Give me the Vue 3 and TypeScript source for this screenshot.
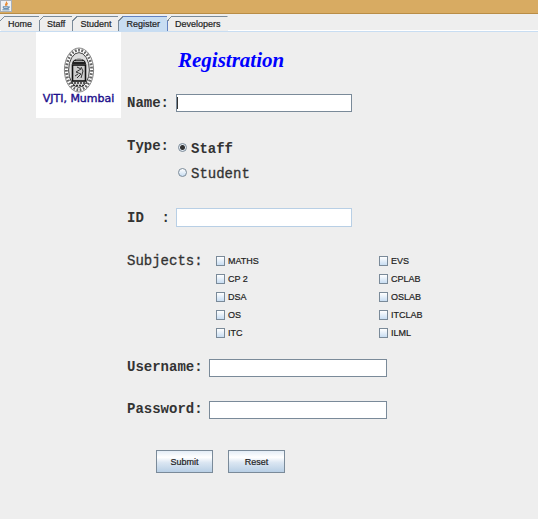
<script setup lang="ts">
import { ref } from 'vue'

const tabs: string[] = ['Home', 'Staff', 'Student', 'Register', 'Developers']
const activeTab = ref('Register')

const subjects: string[] = [
  'MATHS', 'EVS',
  'CP 2', 'CPLAB',
  'DSA', 'OSLAB',
  'OS', 'ITCLAB',
  'ITC', 'ILML',
]

const name = ref('')
const kind = ref('staff')
const id = ref('')
const chosen = ref<string[]>([])
const username = ref('')
const password = ref('')
</script>

<template>
  <div class="window">
    <header class="titlebar">
      <svg class="java" viewBox="0 0 12 12" aria-hidden="true">
        <rect x="0.5" y="0.5" width="11" height="11" fill="#eef1f4" stroke="#a9b0b8" />
        <path d="M6.4 1.6C7.4 3 4.6 3.6 5.8 5.8M7.6 3.2C6.4 4 6.4 4.6 6.8 5.6" fill="none" stroke="#e8872b" stroke-width="1.2" />
        <path d="M3 6.8H8.2V8.4H3.6ZM8.2 7H9.6L8.2 8.4M2.4 9.8H9.4" fill="none" stroke="#5d86a8" stroke-width="1" />
      </svg>
    </header>

    <nav class="tabs">
      <button
        v-for="tab in tabs"
        :key="tab"
        type="button"
        class="tab"
        :class="{ active: tab === activeTab }"
        @click="activeTab = tab"
      >
        {{ tab }}
      </button>
    </nav>

    <main class="panel">
      <figure class="logo">
        <svg class="crest" viewBox="0 0 32 46" aria-hidden="true">
          <ellipse cx="16" cy="23" rx="14.6" ry="22" fill="#fff" stroke="#777" stroke-width="0.9" />
          <ellipse cx="16" cy="23" rx="12.6" ry="19.8" fill="none" stroke="#666" stroke-width="2.8" stroke-dasharray="1.8 1.5" />
          <ellipse cx="16" cy="23" rx="10.4" ry="17.4" fill="#ddd" stroke="#333" stroke-width="0.9" />
          <path d="M9 17C9 10 23 10 23 17Z" fill="#222" />
          <path d="M11 14.5H21M13 12.8H19" stroke="#ccc" stroke-width="0.8" />
          <rect x="9.5" y="18" width="13" height="16" fill="#ccc" stroke="#111" stroke-width="1.6" />
          <path d="M14 20L18 22L13 25L18 27L14 31M18 20L20 24L18 31M12 29L15 27" fill="none" stroke="#333" stroke-width="1" />
          <path d="M8 36H24M10 38.5H22" stroke="#333" stroke-width="1.4" stroke-dasharray="2 1" />
        </svg>
        <figcaption>VJTI, Mumbai</figcaption>
      </figure>

      <form class="form" @submit.prevent>
        <h1>Registration</h1>

        <div class="row name-row">
          <label class="short" for="name">Name:</label>
          <input id="name" v-model="name" class="text focused" type="text" />
        </div>

        <div class="row type-row" role="radiogroup" aria-labelledby="type">
          <span id="type" class="short">Type:</span>
          <div class="radios">
            <label><input v-model="kind" type="radio" name="kind" value="staff" />Staff</label>
            <label class="plain"><input v-model="kind" type="radio" name="kind" value="student" />Student</label>
          </div>
        </div>

        <div class="row id-row">
          <label class="short" for="id"><span>ID</span><span>:</span></label>
          <input id="id" v-model="id" class="text pale" type="text" />
        </div>

        <div class="row subject-row" role="group" aria-labelledby="subjects">
          <span id="subjects" class="long plain">Subjects:</span>
          <div class="subjects">
            <label v-for="s in subjects" :key="s">
              <input v-model="chosen" type="checkbox" :value="s" />{{ s }}
            </label>
          </div>
        </div>

        <div class="row user-row">
          <label class="long" for="username">Username:</label>
          <input id="username" v-model="username" class="text" type="text" />
        </div>

        <div class="row pass-row">
          <label class="long" for="password">Password:</label>
          <input id="password" v-model="password" class="text" type="password" />
        </div>

        <div class="actions">
          <button type="submit">Submit</button>
          <button type="reset">Reset</button>
        </div>
      </form>
    </main>
  </div>
</template>

<style>
body {
  background: #eee;
}
</style>

<style scoped>
* {
  box-sizing: border-box;
}

.window {
  min-height: 100vh;
  background: #eee;
  color: #333;
  font: 9px/12px "Liberation Sans", Arial, sans-serif;
}

.titlebar {
  height: 14px;
  background: #d8ab62;
  border-bottom: 1px solid #b98d46;
}

.java {
  display: block;
  width: 12px;
  height: 12px;
}

.tabs {
  display: flex;
  height: 18px;
  padding: 2px 0 0 1px;
  border-bottom: 1px solid #c8ddf2;
  box-shadow: inset 0 -1px #fff;
}

button {
  font: 9px/12px "Liberation Sans", Arial, sans-serif;
  color: #222;
  -webkit-text-stroke: 0.2px;
}

.tab {
  position: relative;
  height: 15px;
  padding: 0 7px;
  border: 0;
  border-top: 1px solid #7a8a99;
  border-right: 1px solid #7a8a99;
  background: #eee;
}

.tab:last-child {
  border-right-color: transparent;
}

/* slanted top-left corner of each tab */
.tab::before {
  content: "";
  position: absolute;
  left: -1px;
  top: -1px;
  width: 5px;
  height: 5px;
  background: linear-gradient(135deg, #eee 45%, #7a8a99 45%, #7a8a99 60%, transparent 60%);
}

.tab.active {
  background: #c8ddf2;
  border-color: #6382bf;
}

.panel {
  display: flex;
  align-items: flex-start;
  padding-left: 36px;
}

.logo {
  display: flex;
  flex: none;
  flex-direction: column;
  align-items: center;
  width: 85px;
  height: 86px;
  margin: 0;
  padding-top: 15px;
  background: #fff;
}

.crest {
  width: 32px;
  height: 46px;
}

figcaption {
  font: 11px/12px "DejaVu Sans", Verdana, sans-serif;
  white-space: nowrap;
  color: #1c0f8c;
  -webkit-text-stroke: 0.4px;
}

.form {
  flex: 1;
  padding: 15px 0 0 6px;
}

h1 {
  margin: 0 0 21px 51px;
  font: italic bold 21px/26px "Liberation Serif", "Times New Roman", serif;
  color: #00f;
}

.row {
  display: flex;
  align-items: center;
  font: bold 14px/18px "Liberation Mono", "Courier New", monospace;
}

.short {
  display: flex;
  flex: none;
  justify-content: space-between;
  width: 43px;
  margin-right: 6px;
}

.long {
  flex: none;
  width: 76px;
  margin-right: 6px;
  padding-bottom: 2px;
}

.plain {
  font-weight: normal;
  -webkit-text-stroke: 0.3px;
}

.text {
  width: 178px;
  height: 18px;
  padding: 0 2px;
  border: 1px solid #7a8a99;
  border-radius: 0;
  background: #fff;
  font: 12px "Liberation Sans", Arial, sans-serif;
  outline: 0;
}

.short + .text {
  width: 176px;
}

.focused {
  background: linear-gradient(#333, #333) 0 2px / 1px 12px no-repeat #fff;
}

.text.pale {
  height: 19px;
  border-color: #b8cfe5;
}

.type-row {
  align-items: flex-start;
  margin-top: 25px;
}

.radios {
  display: grid;
  gap: 7px;
  padding: 3px 0 0 2px;
}

.radios label {
  display: flex;
  align-items: center;
  gap: 4px;
}

.radios input {
  appearance: none;
  width: 9px;
  height: 9px;
  margin: 0 0 3px;
  border: 1px solid #7a8a99;
  border-radius: 50%;
  background: linear-gradient(#fff, #c8ddf2);
}

.radios input:checked {
  background: radial-gradient(circle, #333 0 2px, #e6eef6 3px);
}

.id-row {
  margin-top: 25px;
}

.subject-row {
  align-items: flex-start;
  margin-top: 25px;
}

.subjects {
  display: grid;
  grid-template-columns: 163px 1fr;
  row-gap: 6px;
  padding: 3px 0 0 7px;
}

.subjects label {
  display: flex;
  align-items: center;
  gap: 3px;
  font: 9px/12px "Liberation Sans", Arial, sans-serif;
  color: #222;
  -webkit-text-stroke: 0.2px;
}

.subjects input {
  appearance: none;
  width: 9px;
  height: 10px;
  margin: 0;
  border: 1px solid #7a8a99;
  background: linear-gradient(#fff, #c8ddf2);
}

.user-row {
  margin-top: 19px;
}

.pass-row {
  margin-top: 22px;
}

.actions {
  display: flex;
  gap: 15px;
  margin: 30px 0 0 29px;
}

.actions button {
  width: 57px;
  height: 23px;
  padding: 0;
  border: 1px solid #7a8a99;
  background: linear-gradient(#e4edf6, #fff 30%, #dbe6f2 55%, #b8cfe5);
}
</style>
